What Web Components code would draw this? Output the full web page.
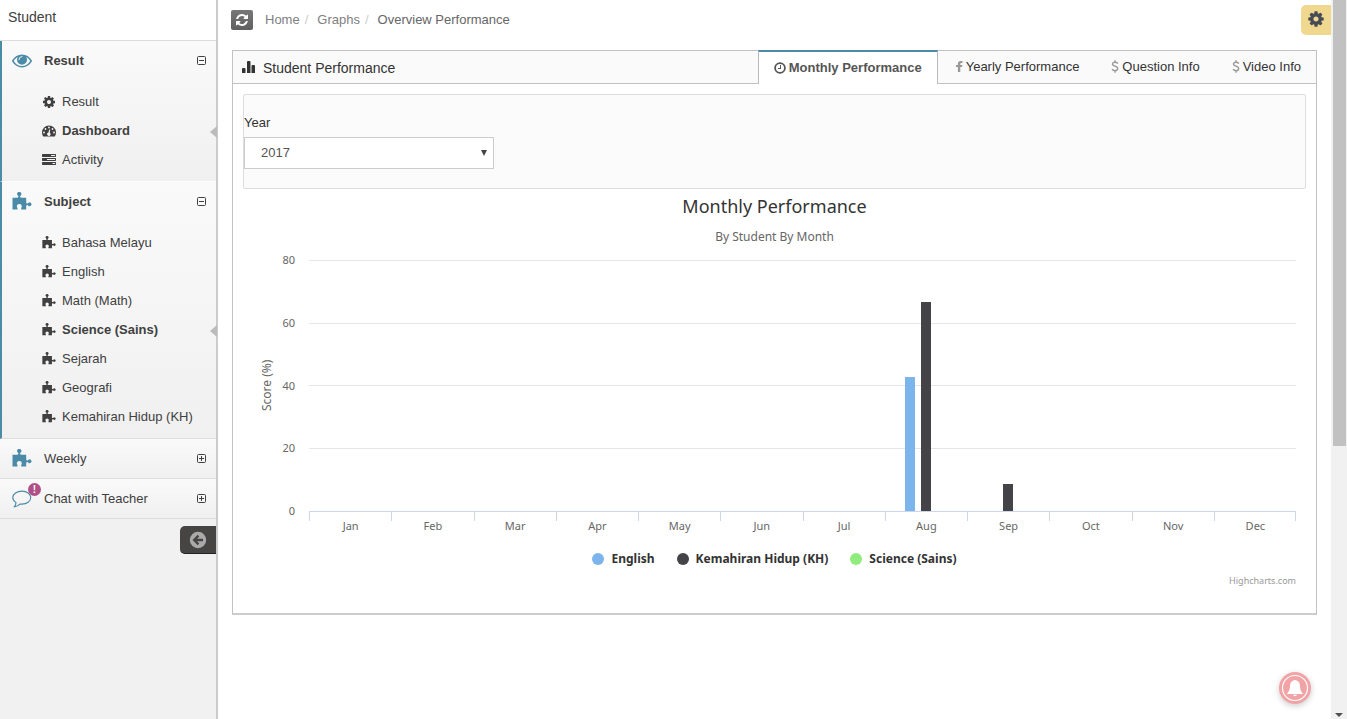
<!DOCTYPE html>
<html lang="en">
<head>
<meta charset="utf-8">
<title>Student Performance</title>
<style>
  body {
    margin: 0;
    font: 13px/20px "Liberation Sans", Arial, sans-serif;
    color: #404040;
    background: #fff;
  }
</style>
</head>
<body>
<school-app></school-app>

<script>
const icons = {
  cog: ['0 0 1792 1792', '<path d="M1152 896q0-106-75-181t-181-75-181 75-75 181 75 181 181 75 181-75 75-181zm512-109v222q0 12-8 23t-20 13l-185 28q-19 54-39 91 35 50 107 138 10 12 10 25t-9 23q-27 37-99 108t-94 71q-12 0-26-9l-138-108q-44 23-91 38-16 136-29 186-7 28-36 28h-222q-14 0-24.5-8.5t-11.5-21.5l-28-184q-49-16-90-37l-141 107q-10 9-25 9-14 0-25-11-126-114-165-168-7-10-7-23 0-12 8-23 15-21 51-66.5t54-70.5q-27-50-41-99l-183-27q-13-2-21-12.5t-8-23.5v-222q0-12 8-23t19-13l186-28q14-46 39-92-40-57-107-138-10-12-10-24 0-10 9-23 26-36 98.5-107.5t94.5-71.5q13 0 26 10l138 107q44-23 91-38 16-136 29-186 7-28 36-28h222q14 0 24.5 8.5t11.5 21.5l28 184q49 16 90 37l142-107q9-9 24-9 13 0 25 10 129 119 165 170 7 8 7 22 0 12-8 23-15 21-51 66.5t-54 70.5q26 50 41 98l183 28q13 2 21 12.5t8 23.5z"/>'],
  refresh: ['0 0 1792 1792', '<path d="M1639 1056q0 5-1 7-64 268-268 434.5t-478 166.5q-146 0-282.5-55t-243.5-157l-129 129q-19 19-45 19t-45-19-19-45v-448q0-26 19-45t45-19h448q26 0 45 19t19 45-19 45l-137 137q71 66 161 102t187 36q134 0 250-65t186-179q11-17 53-117 8-23 30-23h192q13 0 22.5 9.5t9.5 22.5zm25-800v448q0 26-19 45t-45 19h-448q-26 0-45-19t-19-45 19-45l138-138q-148-137-349-137-134 0-250 65t-186 179q-11 17-53 117-8 23-30 23h-199q-13 0-22.5-9.5t-9.5-22.5v-7q65-268 270-434.5t480-166.5q146 0 284 55.5t245 156.5l130-129q19-19 45-19t45 19 19 45z"/>'],
  facebook: ['0 0 8 13', '<path d="M7.500 1V3H6.300Q5.300 3 5.300 4V5H7.400L7.100 7H5.300V12H2.900V7H1V5H2.900V3.700Q2.900 1 5.700 1Z"/>'],
  puzzle: ['0 0 20 20', '<path d="M.5 5.800H4.500Q6.500 5.800 6.500 4.500L6 3.700A2.100 2.100 0 1 1 8.500 3.700L8 4.500Q8 5.800 10 5.800H14.200V10.300Q14.200 11.600 15.500 11.500L16.300 10.900A1.900 1.900 0 1 1 16.300 13.700L15.500 13.100Q14.200 13 14.200 14.500V17.600H9.200V16.200L9.800 14.500A2.500 2.500 0 1 0 4.800 14.500L5.500 16.200V17.600H.5Z"/>'],
  eye: ['0 0 20 14', '<path fill-rule="evenodd" d="M10 .4C14.2.4 17.6 2.6 19.8 6.2Q20.1 7 19.8 7.6C17.6 11.3 14.2 13.5 10 13.5S2.4 11.3.2 7.6Q-.1 7 .2 6.2C2.4 2.6 5.8.4 10 .4ZM1.7 7C3.5 10.1 6.4 12.1 10 12.1S16.5 10.1 18.3 7C17.3 5.3 15.9 3.8 14.3 2.9 14.8 3.8 15 4.7 15 5.7A5 5 0 0 1 5 5.7C5 4.7 5.2 3.8 5.7 2.9 4.1 3.8 2.7 5.3 1.7 7Z"/><path d="M6.9 5.7A3.2 3.2 0 0 1 10 2.5" fill="none" stroke="#fff" stroke-width=".9" stroke-linecap="round"/>'],
  dashboard: ['0 0 14 12', '<path d="M7 .5A7 7 0 0 0 0 7.500Q0 9.600 1.100 11.200Q1.300 11.500 1.600 11.500H12.400Q12.700 11.500 12.900 11.200Q14 9.600 14 7.500A7 7 0 0 0 7 .5Z"/><g fill="#f5f5f5"><circle cx="2" cy="7.500" r=".9"/><circle cx="3.500" cy="4" r=".9"/><circle cx="7" cy="2.500" r=".9"/><circle cx="10.500" cy="4" r=".9"/><circle cx="12" cy="7.500" r=".9"/><path d="M7.300 4.500L8.200 4.800 7.800 7.800A1.700 1.700 0 1 1 6.400 7.600Z"/></g>'],
  tasks: ['0 0 14 14', '<path fill-rule="evenodd" d="M.5 0H13.500L14 .5V2.500L13.500 3H.5L0 2.500V.5ZM9 1V2H13V1ZM.5 4H13.500L14 4.500V6.500L13.500 7H.5L0 6.500V4.500ZM5 5V6H13V5ZM.5 8H13.500L14 8.500V10.500L13.500 11H.5L0 10.500V8.500ZM10.500 9V10H13V9Z" transform="translate(0 1)"/>'],
  chat: ['0 0 21 19', '<path fill="none" stroke="currentColor" stroke-width="1.200" stroke-linejoin="round" d="M10.500 1.200C15.500 1.200 19.700 4.200 19.700 8S15.500 14.900 10.500 14.900Q9.500 14.900 8.600 14.700C6.900 16.500 4.800 17.600 2.300 17.800 3.500 16.500 4.100 15.200 4.200 13.300C2.200 12 .8 10.200.8 8 .8 4.200 5.200 1.200 10.500 1.200Z"/>'],
  minus: ['0 0 9 9', '<rect x=".5" y=".5" width="8" height="8" rx="1" fill="none" stroke="currentColor"/><path d="M2 4H7V5H2Z"/>'],
  plus: ['0 0 9 9', '<rect x=".5" y=".5" width="8" height="8" rx="1" fill="none" stroke="currentColor"/><path d="M2 4H4V2H5V4H7V5H5V7H4V5H2Z"/>'],
  back: ['0 0 18 18', '<path fill-rule="evenodd" d="M9 .8A8.200 8.200 0 1 1 9 17.200 8.200 8.200 0 0 1 9 .8ZM8.700 3.800 3.500 9 8.700 14.200 10.300 12.600 8.100 10.300H14V7.700H8.100L10.300 5.400Z"/>'],
  chart: ['0 0 14 14', '<path d="M0 8Q0 7 1 7H2.500Q3.500 7 3.500 8V12H0ZM5 1Q5 0 6 0H7.500Q8.500 0 8.500 1V12H5ZM9.500 5Q9.500 4 10.500 4H12Q13 4 13 5V12H9.500Z"/>'],
  clock: ['0 0 12 12', '<circle cx="6" cy="6" r="4.900" fill="none" stroke="currentColor" stroke-width="1.800"/><path d="M6 3H7V7H4V6H6Z"/>'],
  dollar: ['0 0 8 13', '<path fill="none" stroke="currentColor" stroke-width="1.400" d="M6.900 3.500Q5.700 2.300 4 2.300 1.500 2.300 1.500 4.200C1.500 6.600 6.700 5.600 6.700 8.600Q6.700 10.700 4 10.700 2.200 10.700 1 9.300M4 .3V2.400M4 10.500V12.700"/>'],
  bell: ['0 0 32 32', '<circle cx="16" cy="16" r="12.500" fill="none" stroke="currentColor" stroke-width="1.200"/><path d="M16 8C18.500 8.300 20.700 9.800 20.900 13 21.200 17.500 21.600 18.800 23.800 21.500V22H8.200V21.500C10.400 18.800 10.800 17.500 11.100 13 11.300 9.800 13.500 8.300 16 8ZM14 22.800H18Q17.600 24.200 16 24.200T14 22.800Z"/>'],
  down: ['0 0 6 6', '<path d="M0 0H6L3 6Z"/>'],
  arrow: ['0 0 8 4', '<path d="M0 0H8L4 4Z"/>']
}

customElements.define('app-icon',
  /**
   * Represents an inline icon, sized by its host.
   */
  class extends HTMLElement {
    constructor () {
      super()
      const [viewBox, shape] = icons[this.getAttribute('name')]
      this.attachShadow({ mode: 'open' }).innerHTML = `
        <style>
          :host { display: inline-block; flex: none; width: 14px; height: 14px; }
          svg { display: block; width: 100%; height: 100%; fill: currentColor; }
        </style>
        <svg viewBox="${viewBox}" aria-hidden="true">${shape}</svg>`
    }
  }
)

customElements.define('nav-item',
  /**
   * Represents one link below a sidebar section.
   */
  class extends HTMLElement {
    constructor () {
      super()
      this.attachShadow({ mode: 'open' }).innerHTML = `
        <style>
          :host { display: block; position: relative; }
          a {
            display: flex;
            align-items: center;
            gap: 6px;
            height: 29px;
            padding-left: 40px;
            color: inherit;
            text-decoration: none;
          }
          :host([active]) a { font-weight: bold; }
          :host([active])::after {
            content: "";
            position: absolute;
            right: -1px;
            top: 10px;
            border: 6px solid transparent;
            border-left-width: 0;
            border-right: 7px solid #bbb;
          }
        </style>
        <a href="#"><app-icon name="${this.getAttribute('icon')}"></app-icon><slot></slot></a>`
    }
  }
)

customElements.define('nav-section',
  /**
   * Represents a collapsible section of the sidebar.
   */
  class extends HTMLElement {
    constructor () {
      super()
      const open = this.hasAttribute('open')
      const badge = this.getAttribute('badge')
      this.attachShadow({ mode: 'open' }).innerHTML = `
        <style>
          :host {
            display: block;
            border-bottom: 1px solid #ddd;
            background: linear-gradient(#fafafa, #f0f0f0);
          }
          :host([open]) { border-left: 2px solid #4c8ba7; }
          :host([joined]) { border-bottom-color: #fff; }
          button {
            display: flex;
            align-items: center;
            width: 100%;
            height: 39px;
            padding: 0 10px 0 12px;
            border: 0;
            background: none;
            font: inherit;
            color: inherit;
            text-align: left;
          }
          :host([open]) button { padding-left: 10px; font-weight: bold; }
          .icon {
            position: relative;
            display: flex;
            width: 32px;
            color: #4c8ba7;
          }
          .icon app-icon { width: 20px; height: 20px; }
          b {
            position: absolute;
            left: 16px;
            top: -6px;
            width: 13px;
            height: 13px;
            border-radius: 50%;
            background: #b05087;
            color: #fff;
            font-size: 10px;
            line-height: 13px;
            text-align: center;
          }
          .toggle { width: 9px; height: 9px; margin-left: auto; }
          .items { padding: 7px 0; }
        </style>
        <button type="button" aria-expanded="${open}">
          <span class="icon"><app-icon name="${this.getAttribute('icon')}"></app-icon>${badge ? `<b>${badge}</b>` : ''}</span>
          ${this.getAttribute('label')}
          <app-icon class="toggle" name="${open ? 'minus' : 'plus'}"></app-icon>
        </button>
        ${open ? '<div class="items"><slot></slot></div>' : ''}`
    }
  }
)

customElements.define('side-bar',
  /**
   * Represents the sidebar with its menu.
   */
  class extends HTMLElement {
    constructor () {
      super()
      this.attachShadow({ mode: 'open' }).innerHTML = `
        <style>
          :host {
            display: flex;
            flex-direction: column;
            flex: none;
            box-sizing: border-box;
            width: 218px;
            border-right: 2px solid #ccc;
            background: #f1f1f1;
          }
          header {
            padding: 7px 8px 13px;
            border-bottom: 1px solid #ddd;
            background: #fff;
            font-size: 14px;
          }
          .collapse {
            align-self: flex-end;
            display: flex;
            align-items: center;
            justify-content: center;
            width: 36px;
            height: 28px;
            margin-top: 7px;
            padding: 0;
            border: 0;
            border-bottom: 1px solid #222;
            border-radius: 5px 0 0 5px;
            background: #474544;
            color: #aaa;
          }
          .collapse app-icon { width: 18px; height: 18px; }
        </style>
        <header>Student</header>
        <nav><slot></slot></nav>
        <button class="collapse" type="button" aria-label="Collapse menu"><app-icon name="back"></app-icon></button>`
    }
  }
)

customElements.define('top-bar',
  /**
   * Represents the bar with the breadcrumb.
   */
  class extends HTMLElement {
    constructor () {
      super()
      this.attachShadow({ mode: 'open' }).innerHTML = `
        <style>
          :host {
            display: flex;
            align-items: center;
            height: 40px;
            padding-left: 13px;
          }
          button { display: flex; align-items: center; justify-content: center; padding: 0; border: 0; }
          .reset {
            width: 22px;
            height: 20px;
            border-radius: 2px;
            background: linear-gradient(#777, #606060);
            color: #fff;
          }
          .setup {
            width: 30px;
            height: 30px;
            margin-left: auto;
            padding-bottom: 2px;
            border-radius: 5px 0 0 5px;
            background: #f0d98f;
            color: #474b55;
          }
          .setup app-icon { width: 18px; height: 18px; }
          ol { display: flex; margin: 0; padding: 0 0 0 12px; list-style: none; color: #666; }
          li + li::before { content: "/"; padding: 0 9px 0 5px; color: #ccc; }
          a { color: #808080; text-decoration: none; }
        </style>
        <button class="reset" type="button" aria-label="Refresh"><app-icon name="refresh"></app-icon></button>
        <ol>
          <li><a href="#">Home</a></li>
          <li><a href="#">Graphs</a></li>
          <li>Overview Performance</li>
        </ol>
        <button class="setup" type="button" aria-label="Settings"><app-icon name="cog"></app-icon></button>`
    }
  }
)

customElements.define('widget-tab',
  /**
   * Represents a tab in the header of a widget.
   */
  class extends HTMLElement {
    constructor () {
      super()
      this.attachShadow({ mode: 'open' }).innerHTML = `
        <style>
          :host { display: block; margin-left: 2px; }
          a {
            display: flex;
            align-items: center;
            gap: 3px;
            height: 31px;
            padding: 0 15px;
            color: #333;
            text-decoration: none;
          }
          app-icon { width: 8px; height: 13px; color: #999; }
          /* covers the header's lines above and below it */
          :host([active]) {
            margin: -1px 0;
            border: 1px solid #bbb;
            border-top: 2px solid #4c8ba7;
            border-bottom: 0;
            background: #fff;
          }
          :host([active]) a { height: 32px; font-weight: bold; color: #555; }
          :host([active]) app-icon { width: 12px; height: 12px; color: #555; }
        </style>
        <a href="#"><app-icon name="${this.getAttribute('icon')}"></app-icon><slot></slot></a>`
    }
  }
)

customElements.define('widget-box',
  /**
   * Represents a framed widget with tabs.
   */
  class extends HTMLElement {
    constructor () {
      super()
      this.attachShadow({ mode: 'open' }).innerHTML = `
        <style>
          :host {
            display: block;
            margin: 10px 14px 0;
            border: 1px solid #c2c2c2;
            border-bottom: 2px solid #ccc;
          }
          header {
            display: flex;
            height: 32px;
            border-bottom: 1px solid #c2c2c2;
            background: #fafafa;
          }
          h2 {
            display: flex;
            align-items: center;
            gap: 7px;
            margin: 0 auto 0 0;
            padding: 2px 0 0 9px;
            font-size: 14px;
            font-weight: normal;
            color: #333;
          }
          .body { padding: 10px 10px 22px; }
        </style>
        <header>
          <h2><app-icon name="chart"></app-icon>${this.getAttribute('heading')}</h2>
          <slot name="tab"></slot>
        </header>
        <div class="body"><slot></slot></div>`
    }
  }
)

customElements.define('year-filter',
  /**
   * Represents the box for choosing a year.
   */
  class extends HTMLElement {
    constructor () {
      super()
      this.attachShadow({ mode: 'open' }).innerHTML = `
        <style>
          :host {
            display: block;
            padding: 18px 0 19px;
            border: 1px solid #ddd;
            border-radius: 2px;
            background: #fbfbfb;
          }
          label { display: block; margin-bottom: 4px; color: #333; }
          .select { position: relative; width: 250px; }
          select {
            appearance: none;
            display: block;
            width: 100%;
            height: 32px;
            padding: 0 16px;
            border: 1px solid #ccc;
            border-radius: 0;
            background: #fff;
            font: inherit;
            font-size: 13px;
            color: #555;
          }
          app-icon { position: absolute; right: 7px; top: 13px; width: 6px; height: 6px; color: #444; }
        </style>
        <label for="year">Year</label>
        <div class="select">
          <select id="year"><option>2017</option></select>
          <app-icon name="down"></app-icon>
        </div>`
    }
  }
)

customElements.define('score-chart',
  /**
   * Represents a column chart with scores by month.
   */
  class extends HTMLElement {
    #months = ['Jan', 'Feb', 'Mar', 'Apr', 'May', 'Jun', 'Jul', 'Aug', 'Sep', 'Oct', 'Nov', 'Dec']

    #series = [
      { name: 'English', color: '#7cb5ec', scores: { Aug: 42.7 } },
      { name: 'Kemahiran Hidup (KH)', color: '#434348', scores: { Aug: 66.7, Sep: 8.7 } },
      { name: 'Science (Sains)', color: '#90ed7d', scores: {} }
    ]

    #max = 80

    constructor () {
      super()
      this.attachShadow({ mode: 'open' }).innerHTML = `
        <style>
          :host {
            display: block;
            padding: 4px 10px 0;
            font-family: "Noto Sans", sans-serif;
            font-size: 11px;
            color: #666;
          }
          h3, p { margin: 0; font-weight: normal; text-align: center; }
          h3 { font-size: 18px; line-height: 26px; color: #333; }
          p { margin: 8px 0 13px; font-size: 12px; }
          .plot { display: flex; }
          .title {
            width: 28px;
            height: 251px;
            font-size: 12px;
            line-height: 28px;
            text-align: center;
            writing-mode: vertical-rl;
            transform: rotate(180deg);
          }
          .scale {
            display: flex;
            flex-direction: column;
            justify-content: space-between;
            width: 14px;
            height: 271px;
            margin: -10px 14px -10px 0;
            text-align: right;
          }
          .months {
            flex: 1;
            display: grid;
            grid-template-columns: repeat(12, 1fr);
            grid-template-rows: 251px 30px;
            background: repeating-linear-gradient(#e6e6e6 0 1px, transparent 1px calc(251px / 4)) 0 0 / 100% 251px no-repeat;
          }
          .bars { display: flex; align-items: flex-end; justify-content: center; gap: 6px; }
          .bars i { width: 10px; }
          .month {
            --tick: linear-gradient(#ccd6eb, #ccd6eb);
            border-top: 1px solid #ccd6eb;
            padding: 4px 0 0 1px;
            text-align: center;
            background: var(--tick) 0 0 / 1px 9px no-repeat;
          }
          .month:last-child {
            background: var(--tick) 0 0 / 1px 9px no-repeat, var(--tick) 100% 0 / 1px 9px no-repeat;
          }
          .legend {
            display: flex;
            justify-content: center;
            gap: 22px;
            margin-top: 8px;
            font-size: 12px;
            font-weight: bold;
            color: #333;
          }
          .legend span { display: flex; align-items: center; gap: 7px; }
          .legend i { width: 12px; height: 12px; border-radius: 50%; }
          a {
            display: block;
            margin-top: 2px;
            font-size: 9px;
            text-align: right;
            color: #999;
            text-decoration: none;
          }
        </style>
        <h3>Monthly Performance</h3>
        <p>By Student By Month</p>
        <div class="plot">
          <div class="title">Score (%)</div>
          <div class="scale">${[80, 60, 40, 20, 0].map(n => `<span>${n}</span>`).join('')}</div>
          <div class="months">
            ${this.#months.map(m => `<div class="bars">${this.#bars(m)}</div>`).join('')}
            ${this.#months.map(m => `<div class="month">${m}</div>`).join('')}
          </div>
        </div>
        <div class="legend">
          ${this.#series.map(s => `<span><i style="background: ${s.color}"></i>${s.name}</span>`).join('')}
        </div>
        <a href="#">Highcharts.com</a>`
    }

    /**
     * Gives the bars of one month.
     *
     * @param {string} month - The month's short name.
     * @returns {string} The markup.
     */
    #bars (month) {
      return this.#series.map(({ color, scores }) => {
        const height = (scores[month] ?? 0) / this.#max * 100
        return `<i style="height: ${height}%; background: ${color}"></i>`
      }).join('')
    }
  }
)

customElements.define('scroll-track',
  /**
   * Represents the page's scrollbar.
   */
  class extends HTMLElement {
    constructor () {
      super()
      this.attachShadow({ mode: 'open' }).innerHTML = `
        <style>
          :host {
            display: flex;
            flex-direction: column;
            justify-content: space-between;
            align-items: center;
            flex: none;
            width: 16px;
            background: #f1f1f1;
          }
          div { width: 13px; height: 62%; margin-left: 1px; background: #c1c1c1; }
          app-icon { width: 8px; height: 4px; margin-bottom: 2px; color: #505050; }
        </style>
        <div></div>
        <app-icon name="arrow"></app-icon>`
    }
  }
)

customElements.define('school-app',
  /**
   * Represents the whole page.
   */
  class extends HTMLElement {
    constructor () {
      super()
      this.attachShadow({ mode: 'open' }).innerHTML = `
        <style>
          :host { display: flex; height: 100vh; overflow: hidden; }
          main { flex: 1; min-width: 0; }
          .notify {
            position: fixed;
            right: 36px;
            bottom: 15px;
            width: 32px;
            height: 32px;
            padding: 0;
            border: 0;
            border-radius: 50%;
            background: #f1a3a6;
            color: #fff;
            box-shadow: 0 2px 6px rgba(0, 0, 0, .2);
          }
          .notify app-icon { display: block; width: 32px; height: 32px; }
        </style>
        <side-bar>
          <nav-section open joined icon="eye" label="Result">
            <nav-item icon="cog">Result</nav-item>
            <nav-item icon="dashboard" active>Dashboard</nav-item>
            <nav-item icon="tasks">Activity</nav-item>
          </nav-section>
          <nav-section open icon="puzzle" label="Subject">
            <nav-item icon="puzzle">Bahasa Melayu</nav-item>
            <nav-item icon="puzzle">English</nav-item>
            <nav-item icon="puzzle">Math (Math)</nav-item>
            <nav-item icon="puzzle" active>Science (Sains)</nav-item>
            <nav-item icon="puzzle">Sejarah</nav-item>
            <nav-item icon="puzzle">Geografi</nav-item>
            <nav-item icon="puzzle">Kemahiran Hidup (KH)</nav-item>
          </nav-section>
          <nav-section icon="puzzle" label="Weekly"></nav-section>
          <nav-section icon="chat" label="Chat with Teacher" badge="!"></nav-section>
        </side-bar>
        <main>
          <top-bar></top-bar>
          <widget-box heading="Student Performance">
            <widget-tab slot="tab" icon="clock" active>Monthly Performance</widget-tab>
            <widget-tab slot="tab" icon="facebook">Yearly Performance</widget-tab>
            <widget-tab slot="tab" icon="dollar">Question Info</widget-tab>
            <widget-tab slot="tab" icon="dollar">Video Info</widget-tab>
            <year-filter></year-filter>
            <score-chart></score-chart>
          </widget-box>
        </main>
        <scroll-track></scroll-track>
        <button class="notify" type="button" aria-label="Notifications"><app-icon name="bell"></app-icon></button>`
    }
  }
)
</script>
</body>
</html>
